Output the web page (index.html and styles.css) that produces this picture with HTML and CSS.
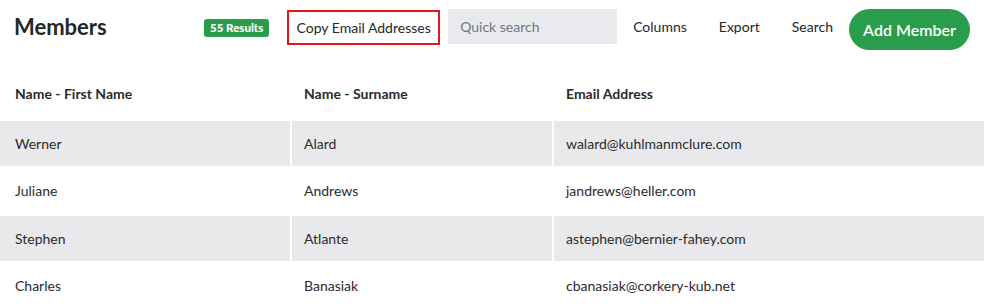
FILE: index.html
```html
<!DOCTYPE html>
<html>
<head>
    <title>Members</title>
    <link rel="stylesheet" href="styles.css">
</head>
<body>
    <div class="topbar">
        <h1 class="title">Members</h1>
        <span class="badge">55 Results</span>
        <button class="copy-btn">Copy Email Addresses</button>
        <input type="text" class="quick-search" placeholder="Quick search">
        <a class="link">Columns</a>
        <a class="link">Export</a>
        <a class="link">Search</a>
        <button class="add-btn">Add Member</button>
    </div>

    <!-- Members list -->
    <table class="members">
        <thead>
            <tr>
                <th class="col-first">Name - First Name</th>
                <th class="col-last">Name - Surname</th>
                <th>Email Address</th>
            </tr>
        </thead>
        <tbody>
            <tr class="shaded">
                <td>Werner</td>
                <td>Alard</td>
                <td>walard@kuhlmanmclure.com</td>
            </tr>
            <tr>
                <td>Juliane</td>
                <td>Andrews</td>
                <td>jandrews@heller.com</td>
            </tr>
            <tr class="shaded">
                <td>Stephen</td>
                <td>Atlante</td>
                <td>astephen@bernier-fahey.com</td>
            </tr>
            <tr>
                <td>Charles</td>
                <td>Banasiak</td>
                <td>cbanasiak@corkery-kub.net</td>
            </tr>
        </tbody>
    </table>
</body>
</html>
```

FILE: styles.css
```css
body {
    margin: 0;
    font-family: Lato, "Liberation Sans", sans-serif;
    color: #2a2b2e;
    font-size: 14px;
    overflow: hidden;
}
.topbar {
    height: 58px;
    display: flex;
    align-items: flex-start;
    padding: 0 16px 0 14px;
}
.title {
    flex: 1;
    margin: 12px 0 0 0;
    font-size: 22px;
    line-height: 30px;
    font-weight: 700;
    color: #25262a;
}
.badge {
    background-color: #2a9d4c;
    color: #fff;
    font-size: 11.5px;
    font-weight: 900;
    width: 65px;
    height: 18px;
    line-height: 18px;
    text-align: center;
    border-radius: 3px;
    margin: 19px 18px 0 0;
}
.copy-btn {
    width: 153px;
    height: 35px;
    border: 2px solid #e8141b;
    background: #fff;
    font-family: inherit;
    font-size: 14px;
    color: #25262a;
    padding: 0;
    margin: 10px 8px 0 0;
}
.quick-search {
    width: 169px;
    height: 35px;
    box-sizing: border-box;
    border: none;
    background-color: #e9eaee;
    padding: 0 12px;
    font-family: inherit;
    font-size: 14px;
    margin-top: 9px;
}
.quick-search::placeholder {
    color: #737780;
}
.link {
    padding: 0 16px;
    line-height: 20px;
    color: #25262a;
    margin-top: 17px;
}
.add-btn {
    width: 121px;
    height: 41px;
    border: none;
    border-radius: 21px;
    background-color: #2a9d4c;
    color: #fff;
    font-family: inherit;
    font-size: 16px;
    font-weight: 600;
    margin-top: 9px;
}

/* table */
.members {
    border-collapse: separate;
    border-spacing: 2px;
    width: 988px;
    margin: 7px 0 0 -2px;
    table-layout: fixed;
}
.members th {
    text-align: left;
    font-weight: 700;
    height: 52px;
    padding: 0 12px;
}
.members td {
    height: 45.3px;
    padding: 0 12px;
}
.members th:first-child,
.members td:first-child {
    padding-left: 15px;
}
.col-first {
    width: 263px;
}
.col-last {
    width: 236px;
}
.shaded td {
    background-color: #e9e9eb;
}
```
